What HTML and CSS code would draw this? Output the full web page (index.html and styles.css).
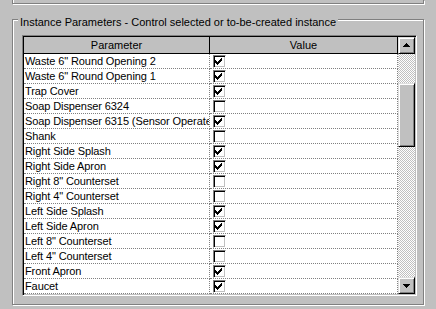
FILE: index.html
```html
<!DOCTYPE html>
<html>
<head>
<meta charset="utf-8">
<link rel="stylesheet" href="styles.css">
</head>
<body>
<div class="prev"></div>
<div class="group">
  <div class="group-title">Instance Parameters - Control selected or to-be-created instance</div>
  <div class="table">
    <div class="grid">
      <div class="hcell hcell-first">Parameter</div>
      <div class="hcell">Value</div>

      <div class="cell name">Waste 6" Round Opening 2</div>
      <div class="cell val"><span class="cb"><svg class="chk" width="7" height="7" viewBox="0 0 7 7"><path d="M0 2h1v3H0zM1 3h1v3H1zM2 4h1v3H2zM3 3h1v3H3zM4 2h1v3H4zM5 1h1v3H5zM6 0h1v3H6z"/></svg></span></div>

      <div class="cell name">Waste 6" Round Opening 1</div>
      <div class="cell val"><span class="cb"><svg class="chk" width="7" height="7" viewBox="0 0 7 7"><path d="M0 2h1v3H0zM1 3h1v3H1zM2 4h1v3H2zM3 3h1v3H3zM4 2h1v3H4zM5 1h1v3H5zM6 0h1v3H6z"/></svg></span></div>

      <div class="cell name">Trap Cover</div>
      <div class="cell val"><span class="cb"><svg class="chk" width="7" height="7" viewBox="0 0 7 7"><path d="M0 2h1v3H0zM1 3h1v3H1zM2 4h1v3H2zM3 3h1v3H3zM4 2h1v3H4zM5 1h1v3H5zM6 0h1v3H6z"/></svg></span></div>

      <div class="cell name">Soap Dispenser 6324</div>
      <div class="cell val"><span class="cb"></span></div>

      <div class="cell name">Soap Dispenser 6315 (Sensor Operated)</div>
      <div class="cell val"><span class="cb"><svg class="chk" width="7" height="7" viewBox="0 0 7 7"><path d="M0 2h1v3H0zM1 3h1v3H1zM2 4h1v3H2zM3 3h1v3H3zM4 2h1v3H4zM5 1h1v3H5zM6 0h1v3H6z"/></svg></span></div>

      <div class="cell name">Shank</div>
      <div class="cell val"><span class="cb"></span></div>

      <div class="cell name">Right Side Splash</div>
      <div class="cell val"><span class="cb"><svg class="chk" width="7" height="7" viewBox="0 0 7 7"><path d="M0 2h1v3H0zM1 3h1v3H1zM2 4h1v3H2zM3 3h1v3H3zM4 2h1v3H4zM5 1h1v3H5zM6 0h1v3H6z"/></svg></span></div>

      <div class="cell name">Right Side Apron</div>
      <div class="cell val"><span class="cb"><svg class="chk" width="7" height="7" viewBox="0 0 7 7"><path d="M0 2h1v3H0zM1 3h1v3H1zM2 4h1v3H2zM3 3h1v3H3zM4 2h1v3H4zM5 1h1v3H5zM6 0h1v3H6z"/></svg></span></div>

      <div class="cell name">Right 8" Counterset</div>
      <div class="cell val"><span class="cb"></span></div>

      <div class="cell name">Right 4" Counterset</div>
      <div class="cell val"><span class="cb"></span></div>

      <div class="cell name">Left Side Splash</div>
      <div class="cell val"><span class="cb"><svg class="chk" width="7" height="7" viewBox="0 0 7 7"><path d="M0 2h1v3H0zM1 3h1v3H1zM2 4h1v3H2zM3 3h1v3H3zM4 2h1v3H4zM5 1h1v3H5zM6 0h1v3H6z"/></svg></span></div>

      <div class="cell name">Left Side Apron</div>
      <div class="cell val"><span class="cb"><svg class="chk" width="7" height="7" viewBox="0 0 7 7"><path d="M0 2h1v3H0zM1 3h1v3H1zM2 4h1v3H2zM3 3h1v3H3zM4 2h1v3H4zM5 1h1v3H5zM6 0h1v3H6z"/></svg></span></div>

      <div class="cell name">Left 8" Counterset</div>
      <div class="cell val"><span class="cb"></span></div>

      <div class="cell name">Left 4" Counterset</div>
      <div class="cell val"><span class="cb"></span></div>

      <div class="cell name">Front Apron</div>
      <div class="cell val"><span class="cb"><svg class="chk" width="7" height="7" viewBox="0 0 7 7"><path d="M0 2h1v3H0zM1 3h1v3H1zM2 4h1v3H2zM3 3h1v3H3zM4 2h1v3H4zM5 1h1v3H5zM6 0h1v3H6z"/></svg></span></div>

      <div class="cell name">Faucet</div>
      <div class="cell val"><span class="cb"><svg class="chk" width="7" height="7" viewBox="0 0 7 7"><path d="M0 2h1v3H0zM1 3h1v3H1zM2 4h1v3H2zM3 3h1v3H3zM4 2h1v3H4zM5 1h1v3H5zM6 0h1v3H6z"/></svg></span></div>
    </div>
    <div class="vscroll">
      <div class="sbtn"><svg class="arrow" width="7" height="4" viewBox="0 0 7 4"><path d="M3 0h1v1H3zM2 1h3v1H2zM1 2h5v1H1zM0 3h7v1H0z"/></svg></div>
      <div class="track"><div class="thumb"></div></div>
      <div class="sbtn sbtn-down"><svg class="arrow" width="7" height="4" viewBox="0 0 7 4"><path d="M0 0h7v1H0zM1 1h5v1H1zM2 2h3v1H2zM3 3h1v1H3z"/></svg></div>
    </div>
  </div>
</div>
</body>
</html>
```

FILE: styles.css
```css
html, body {
  margin: 0;
  padding: 0;
  background: #c0c0c0;
}

body {
  font-family: "Liberation Sans", Arial, sans-serif;
  font-size: 11px;
  color: #000;
  width: 436px;
  height: 309px;
  overflow: hidden;
}

.prev {
  margin-left: 12px;
  width: 410px;
  height: 3px;
  border: 1px solid #808080;
  border-top: none;
  box-shadow: inset 1px 0 0 #fff, 1px 1px 0 #fff;
}

.group {
  margin-top: 15px;
  margin-left: 12px;
  width: 410px;
  border: 1px solid #808080;
  box-shadow: inset 1px 1px 0 #fff, 1px 1px 0 #fff;
  padding-bottom: 8px;
}

.group-title {
  display: table;
  margin-top: -4px;
  margin-left: 5px;
  padding: 0 2px;
  line-height: 13px;
  background: #c0c0c0;
  white-space: nowrap;
}

.table {
  margin-top: 6px;
  margin-left: 9px;
  width: 391px;
  height: 257px;
  padding: 1px;
  border: 1px solid;
  border-color: #808080 #fff #fff #808080;
  box-shadow: inset 1px 1px 0 #000, inset -1px -1px 0 #c0c0c0;
  display: flex;
}

.grid {
  width: 374px;
  display: grid;
  grid-template-columns: 186px 188px;
  grid-auto-rows: 15px;
  grid-template-rows: 17px;
  background: #fff;
}

.hcell {
  background: #c0c0c0;
  border-right: 1px solid #000;
  border-bottom: 1px solid #000;
  text-align: center;
  line-height: 16px;
}

.cell {
  background: #fff;
  border-right: 1px dotted #808080;
  border-bottom: 1px dotted #808080;
  line-height: 14px;
  white-space: nowrap;
  overflow: hidden;
}

.name {
  padding-left: 1px;
  letter-spacing: -0.1px;
}

.val {
  padding-left: 3px;
  padding-top: 1px;
}

.cb {
  display: block;
  box-sizing: border-box;
  width: 13px;
  height: 13px;
  border: 1px solid;
  border-color: #808080 #fff #fff #808080;
  box-shadow: inset 1px 1px 0 #000, inset -1px -1px 0 #c0c0c0;
  background: #fff;
  padding: 2px 0 0 1px;
}

.chk {
  display: block;
  shape-rendering: crispEdges;
}

.vscroll {
  width: 17px;
  display: flex;
  flex-direction: column;
}

.sbtn {
  box-sizing: border-box;
  height: 17px;
  border: 1px solid;
  border-color: #dfdfdf #000 #000 #dfdfdf;
  box-shadow: inset 1px 1px 0 #fff, inset -1px -1px 0 #808080;
  background: #c0c0c0;
  display: flex;
  justify-content: center;
  padding-top: 5px;
}

.sbtn-down {
  padding-top: 6px;
}

.arrow {
  display: block;
  shape-rendering: crispEdges;
}

.track {
  flex: 1;
  background: conic-gradient(#fff 0 25%, #c0c0c0 0 50%, #fff 0 75%, #c0c0c0 0);
  background-size: 2px 2px;
}

.thumb {
  box-sizing: border-box;
  margin-top: 29px;
  height: 64px;
  border: 1px solid;
  border-color: #dfdfdf #000 #000 #dfdfdf;
  box-shadow: inset 1px 1px 0 #fff, inset -1px -1px 0 #808080;
  background: #c0c0c0;
}
```
